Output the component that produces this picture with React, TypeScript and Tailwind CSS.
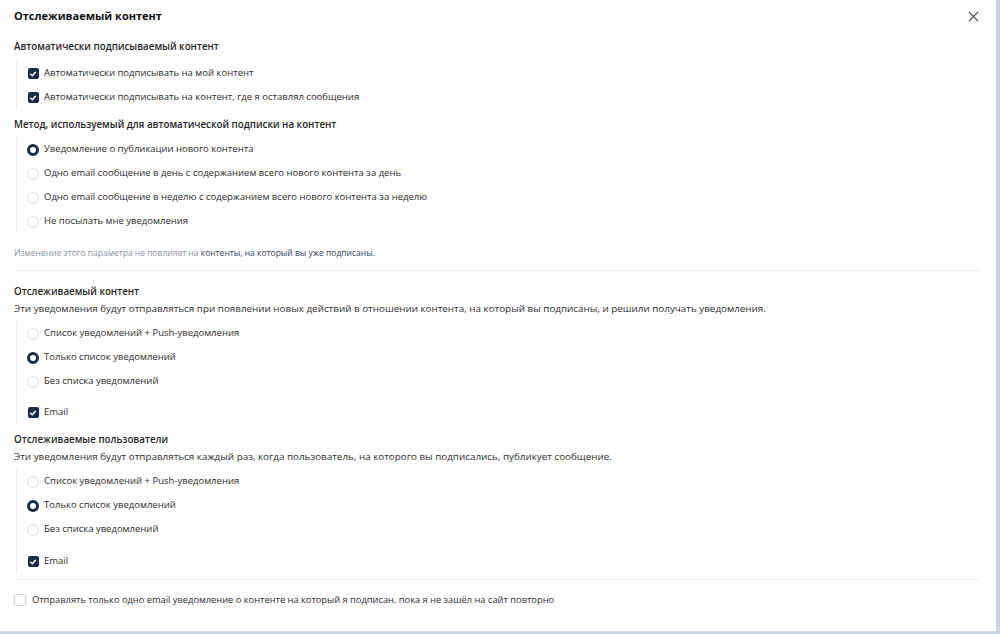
import React from "react";

function Check({ checked }: { checked: boolean }) {
  if (checked) {
    return (
      <span className="flex h-[11px] w-[11px] items-center justify-center rounded-[2px] bg-[#1b2a47]">
        <svg width="8" height="8" viewBox="0 0 10 10" fill="none">
          <path d="M2 5.2 L4.1 7.2 L8 2.8" stroke="white" strokeWidth="1.8" strokeLinecap="round" strokeLinejoin="round" />
        </svg>
      </span>
    );
  }
  return <span className="block h-[12px] w-[12px] rounded-[2px] border border-[#d4d9e0] bg-white" />;
}

function Radio({ checked }: { checked: boolean }) {
  if (checked) {
    return <span className="block h-[12px] w-[12px] rounded-full border-[3.5px] border-[#1b2a47] bg-white" />;
  }
  return <span className="block h-[12px] w-[12px] rounded-full border border-[#dadee4] bg-white" />;
}

function Row({ kind, checked, label }: { kind: "c" | "r"; checked: boolean; label: string }) {
  return (
    <div className="flex h-[24px] items-center gap-[5px] pt-[1px]">
      <span className="flex w-[12px] justify-center">{kind === "c" ? <Check checked={checked} /> : <Radio checked={checked} />}</span>
      <span className="text-[9.5px] text-[#2b2b2b]">{label}</span>
    </div>
  );
}

function Group({ children, className = "" }: { children: React.ReactNode; className?: string }) {
  return <div className={`ml-[2px] border-l border-[#eceef1] pl-[10px] ${className}`}>{children}</div>;
}

function Heading({ children, className = "" }: { children: React.ReactNode; className?: string }) {
  return <div className={`flex items-center text-[9.75px] font-semibold text-[#1f1f1f] ${className}`}>{children}</div>;
}

export default function App() {
  return (
    <div
      className="h-[634px] w-[1000px] border-b-[3px] border-r-4 border-[#c7d4e1] bg-white px-[14px]"
      style={{ fontFamily: "'Open Sans', 'Noto Sans', sans-serif" }}
    >
      <div className="flex h-[32px] items-center justify-between">
        <span className="text-[11px] font-bold text-[#111]">Отслеживаемый контент</span>
        <svg width="11" height="11" viewBox="0 0 12 12" className="mr-[3px]">
          <path d="M1 1 L11 11 M11 1 L1 11" stroke="#444" strokeWidth="1.3" />
        </svg>
      </div>

      <Heading className="mt-[5px] h-[20px]">Автоматически подписываемый контент</Heading>
      <Group className="mt-[4px]">
        <Row kind="c" checked label="Автоматически подписывать на мой контент" />
        <Row kind="c" checked label="Автоматически подписывать на контент, где я оставлял сообщения" />
      </Group>

      <Heading className="mt-[6px] h-[20px]">Метод, используемый для автоматической подписки на контент</Heading>
      <Group className="mt-[2px]">
        <Row kind="r" checked label="Уведомление о публикации нового контента" />
        <Row kind="r" checked={false} label="Одно email сообщение в день с содержанием всего нового контента за день" />
        <Row kind="r" checked={false} label="Одно email сообщение в неделю с содержанием всего нового контента за неделю" />
        <Row kind="r" checked={false} label="Не посылать мне уведомления" />
      </Group>

      <div className="mt-[10px] flex h-[20px] items-center text-[8.5px] text-[#8a93a0]">
        Изменение этого параметра не повлияет на&nbsp;<span className="text-[#33435a]">контенты, на который вы уже подписаны.</span>
      </div>

      <div className="mr-[3px] mt-[7px] border-t border-[#ebedf0]" />

      <Heading className="mt-[13px] h-[16px]">Отслеживаемый контент</Heading>
      <div className="flex h-[16px] items-center text-[9.85px] text-[#2e2e2e]">
        Эти уведомления будут отправляться при появлении новых действий в отношении контента, на который вы подписаны, и решили получать уведомления.
      </div>
      <Group className="mt-[5px]">
        <Row kind="r" checked={false} label="Список уведомлений + Push-уведомления" />
        <Row kind="r" checked label="Только список уведомлений" />
        <Row kind="r" checked={false} label="Без списка уведомлений" />
        <div className="pt-[7px]">
          <Row kind="c" checked label="Email" />
        </div>
      </Group>

      <Heading className="mt-[8px] h-[16px]">Отслеживаемые пользователи</Heading>
      <div className="flex h-[16px] items-center text-[9.85px] text-[#2e2e2e]">
        Эти уведомления будут отправляться каждый раз, когда пользователь, на которого вы подписались, публикует сообщение.
      </div>
      <Group className="mt-[5px]">
        <Row kind="r" checked={false} label="Список уведомлений + Push-уведомления" />
        <Row kind="r" checked label="Только список уведомлений" />
        <Row kind="r" checked={false} label="Без списка уведомлений" />
        <div className="pt-[8px]">
          <Row kind="c" checked label="Email" />
        </div>
      </Group>

      <div className="mr-[3px] mt-[6px] border-t border-[#ebedf0]" />

      <div className="mt-[10px] flex h-[20px] items-center gap-[6px]">
        <Check checked={false} />
        <span className="text-[9.3px] text-[#2b2b2b]">
          Отправлять только одно email уведомление о контенте на который я подписан, пока я не зашёл на сайт повторно
        </span>
      </div>
    </div>
  );
}
